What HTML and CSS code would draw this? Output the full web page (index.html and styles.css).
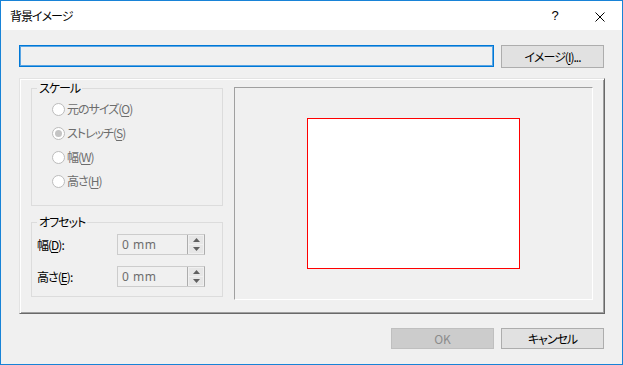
FILE: index.html
```html
<!DOCTYPE html>
<html lang="ja">
<head>
<meta charset="utf-8">
<title>背景イメージ</title>
<link rel="stylesheet" href="styles.css">
</head>
<body>
<div class="window">
  <div class="titlebar">
    <span class="title">背景イメージ</span>
    <span class="help">?</span>
    <span class="close"><svg width="10" height="10" viewBox="0 0 10 10"><path d="M0.5 0.5 L9.5 9.5 M9.5 0.5 L0.5 9.5" stroke="#000" stroke-width="1" fill="none"/></svg></span>
  </div>
  <div class="content">
    <div class="toprow">
      <div class="path-input"></div>
      <button class="btn">イメージ(<u>I</u>)...</button>
    </div>
    <div class="panel">
      <div class="leftcol">
        <fieldset class="group">
          <legend>スケール</legend>
          <div class="group-body scale">
            <div class="radio"><span class="dot"></span><span class="lbl">元のサイズ(<u>O</u>)</span></div>
            <div class="radio"><span class="dot on"></span><span class="lbl">ストレッチ(<u>S</u>)</span></div>
            <div class="radio"><span class="dot"></span><span class="lbl">幅(<u>W</u>)</span></div>
            <div class="radio"><span class="dot"></span><span class="lbl">高さ(<u>H</u>)</span></div>
          </div>
        </fieldset>
        <fieldset class="group offset">
          <legend>オフセット</legend>
          <div class="group-body offset-body">
            <div class="field">
              <span class="flabel">幅(<u>D</u>):</span>
              <div class="spin">
                <span class="val">0 mm</span>
                <div class="arrows">
                  <span class="arr"><svg width="7" height="4" viewBox="0 0 7 4"><path d="M0 4 L3.5 0 L7 4 Z" fill="#606060"/></svg></span>
                  <span class="arr"><svg width="7" height="4" viewBox="0 0 7 4"><path d="M0 0 L7 0 L3.5 4 Z" fill="#606060"/></svg></span>
                </div>
              </div>
            </div>
            <div class="field">
              <span class="flabel">高さ(<u>E</u>):</span>
              <div class="spin">
                <span class="val">0 mm</span>
                <div class="arrows">
                  <span class="arr"><svg width="7" height="4" viewBox="0 0 7 4"><path d="M0 4 L3.5 0 L7 4 Z" fill="#606060"/></svg></span>
                  <span class="arr"><svg width="7" height="4" viewBox="0 0 7 4"><path d="M0 0 L7 0 L3.5 4 Z" fill="#606060"/></svg></span>
                </div>
              </div>
            </div>
          </div>
        </fieldset>
      </div>
      <div class="preview">
        <div class="page"></div>
      </div>
    </div>
    <div class="bottom">
      <button class="btn disabled" disabled>OK</button>
      <button class="btn">キャンセル</button>
    </div>
  </div>
</div>
</body>
</html>
```

FILE: styles.css
```css
* { box-sizing: border-box; }
html, body { margin: 0; padding: 0; }
body {
  width: 623px;
  height: 365px;
  background: #f0f0f0;
  font-family: "Noto Sans CJK JP", "Noto Sans", sans-serif;
  font-size: 12px;
  font-feature-settings: "palt";
  letter-spacing: -1px;
  color: #000;
  overflow: hidden;
}
u { text-decoration-thickness: 1px; text-underline-offset: 2px; }

.window {
  width: 623px;
  height: 365px;
  border: 1px solid #1883d7;
  background: #f0f0f0;
}

.titlebar {
  height: 29px;
  background: #fff;
  display: flex;
  align-items: center;
  padding-left: 9px;
}
.title { flex: 1; font-size: 12px; line-height: 14px; }
.help { width: 12px; text-align: center; font-family: "Liberation Sans", sans-serif; font-size: 13px; letter-spacing: 0; margin-right: 34px; }
.close { width: 10px; height: 10px; display: flex; margin-right: 17px; margin-top: 2px; }

.content {
  width: 604px;
  padding: 15px 0 0 18px;
  display: flex;
  flex-direction: column;
  box-sizing: content-box;
}

.toprow { display: flex; gap: 7px; }
.path-input {
  width: 475px;
  height: 22px;
  border: 1px solid #0078d7;
  box-shadow: inset 0 0 0 1px #5aa5e3;
  background: #f0f0f0;
}
.btn {
  width: 103px;
  height: 23px;
  margin: 0;
  padding: 0;
  border: 1px solid #adadad;
  background: #e1e1e1;
  font-family: inherit;
  font-size: 12px;
  font-feature-settings: "palt";
  letter-spacing: -1px;
  color: #000;
  line-height: 14px;
}
.btn.disabled { background: #cccccc; border-color: #bfbfbf; color: #8b8b8b; letter-spacing: 0; }

.panel {
  margin-top: 10px;
  width: 586px;
  height: 236px;
  border: 1px solid;
  border-color: #e3e3e3 #696969 #696969 #e3e3e3;
  box-shadow: inset 1px 1px 0 #fff, inset -1px -1px 0 #a0a0a0;
  padding: 2px 11px 0 11px;
  display: flex;
  align-items: flex-start;
  gap: 11px;
}

.leftcol { width: 192px; display: flex; flex-direction: column; }

.group {
  margin: 0;
  border: 1px solid #dcdcdc;
  padding: 0;
  min-inline-size: 0;
}
.group legend {
  padding: 0 2px;
  margin-left: 5px;
  line-height: 14px;
  font-size: 12px;
}
.scale { padding: 2px 0 12px 20px; }
.offset { margin-top: 9px; }
.offset-body { padding: 5px 0 9px 5px; }

.radio { height: 24px; display: flex; align-items: center; }
.dot {
  width: 13px;
  height: 13px;
  border-radius: 50%;
  border: 1px solid #bcbcbc;
  background: #fff;
  margin-right: 2px;
  display: flex;
  align-items: center;
  justify-content: center;
}
.dot.on::after {
  content: "";
  width: 7px;
  height: 7px;
  border-radius: 50%;
  background: #c4c4c4;
}
.lbl { color: #6d6d6d; line-height: 14px; }

.field { height: 21px; display: flex; align-items: center; }
.field + .field { margin-top: 11px; }
.flabel { width: 80px; line-height: 14px; }
.spin {
  width: 88px;
  height: 21px;
  border: 1px solid #cccccc;
  border-right-color: #adadad;
  background: #f0f0f0;
  display: flex;
  align-items: center;
  justify-content: space-between;
  padding: 0 0 0 4px;
}
.val { color: #6d6d6d; font-family: "Noto Sans", sans-serif; font-size: 12px; letter-spacing: 0.5px; }
.arrows {
  width: 17px;
  height: 19px;
  border-left: 1px solid #adadad;
  display: flex;
  flex-direction: column;
  padding: 1px;
  gap: 1px;
}
.arr {
  flex: 1;
  background: #e6e6e6;
  display: flex;
  align-items: center;
  justify-content: center;
}

.preview {
  margin-top: 6px;
  width: 359px;
  height: 213px;
  border: 1px solid;
  border-color: #a0a0a0 #fff #fff #a0a0a0;
  display: flex;
  align-items: center;
  justify-content: center;
}
.page {
  width: 213px;
  height: 151px;
  border: 1px solid #ff0000;
  background: #fff;
}

.bottom {
  width: 585px;
  margin-top: 14px;
  display: flex;
  justify-content: flex-end;
  gap: 7px;
}
.bottom .btn { height: 21px; }
```
